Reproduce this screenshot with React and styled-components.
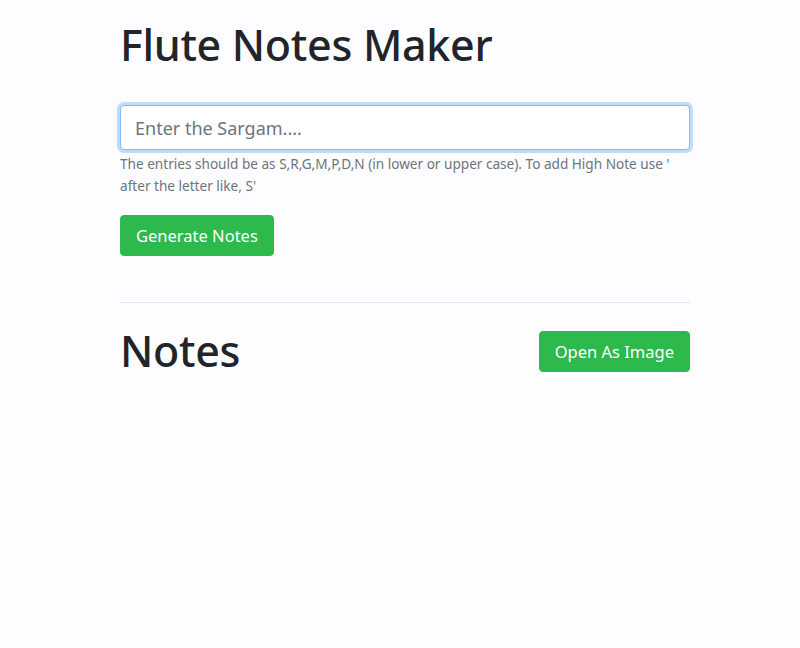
import React, { useState } from 'react'
import styled, { createGlobalStyle } from 'styled-components'

const GlobalStyle = createGlobalStyle`
  html, body {
    margin: 0;
    padding: 0;
    background: #fdfcfe;
  }
  body {
    font-family: 'Noto Sans', 'Open Sans', sans-serif;
    color: #212529;
  }
`

const Page = styled.main`
  width: 570px;
  margin: 0 0 0 120px;
  padding-top: 17px;
`

const Title = styled.h1`
  margin: 0;
  font-size: 43px;
  font-weight: 500;
  line-height: 56px;
  letter-spacing: -0.3px;
`

const Form = styled.form`
  display: flex;
  flex-direction: column;
  align-items: flex-start;
  margin-top: 32px;
`

const SargamInput = styled.input`
  box-sizing: border-box;
  width: 100%;
  height: 45px;
  padding: 0 14px;
  font-family: inherit;
  font-size: 18px;
  color: #495057;
  background: #fff;
  border: 1px solid #80bdff;
  border-radius: 4px;
  box-shadow: 0 0 0 3px rgba(0, 123, 255, 0.25);
  outline: none;

  &::placeholder {
    color: #6c757d;
  }
`

const Help = styled.small`
  display: block;
  margin-top: 3px;
  font-size: 13.6px;
  line-height: 22px;
  color: #6c757d;
`

const GreenButton = styled.button`
  box-sizing: border-box;
  height: 41px;
  padding: 0 15px;
  font-family: inherit;
  font-size: 16.5px;
  color: #fff;
  background: #2db94b;
  border: 1px solid #2db94b;
  border-radius: 4px;
  cursor: pointer;
`

const GenerateButton = styled(GreenButton)`
  margin-top: 18px;
`

const Divider = styled.hr`
  margin: 46px 0 0;
  border: 0;
  border-top: 1px solid #e6e6ea;
`

const NotesHeader = styled.div`
  display: flex;
  align-items: center;
  justify-content: space-between;
  margin-top: 26px;
`

const NotesTitle = styled(Title)`
  line-height: 44px;
`

const App = () => {
  const [sargam, setSargam] = useState('')

  return (
    <>
      <GlobalStyle />
      <Page>
        <Title>Flute Notes Maker</Title>
        <Form onSubmit={(e) => e.preventDefault()}>
          <SargamInput
            type="text"
            placeholder="Enter the Sargam...."
            value={sargam}
            onChange={(e) => setSargam(e.target.value)}
          />
          <Help>
            The entries should be as S,R,G,M,P,D,N (in lower or upper case). To add High Note use ' after the letter like, S'
          </Help>
          <GenerateButton type="submit">Generate Notes</GenerateButton>
        </Form>
        <Divider />
        <NotesHeader>
          <NotesTitle>Notes</NotesTitle>
          <GreenButton type="button">Open As Image</GreenButton>
        </NotesHeader>
      </Page>
    </>
  )
}

export default App
